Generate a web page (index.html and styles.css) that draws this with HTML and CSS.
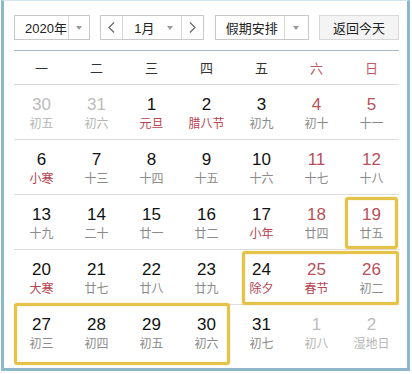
FILE: index.html
```html
<!DOCTYPE html>
<html lang="zh-CN">
<head>
<meta charset="utf-8">
<link rel="stylesheet" href="styles.css">
</head>
<body>
<div class="frame">
  <div class="toolbar">
    <div class="select year">
      <span class="sel-text">2020年</span>
      <span class="sel-arrow split"><i class="tri"></i></span>
    </div>
    <div class="select month">
      <span class="nav prev"><svg width="7" height="11" viewBox="0 0 7 11"><polyline points="6,0.5 1,5.5 6,10.5" fill="none" stroke="#666" stroke-width="1.2"/></svg></span>
      <span class="sel-text">1月</span>
      <span class="sel-arrow"><i class="tri"></i></span>
      <span class="nav next"><svg width="7" height="11" viewBox="0 0 7 11"><polyline points="1,0.5 6,5.5 1,10.5" fill="none" stroke="#666" stroke-width="1.2"/></svg></span>
    </div>
    <div class="select holiday">
      <span class="sel-text">假期安排</span>
      <span class="sel-arrow split"><i class="tri"></i></span>
    </div>
    <button class="today">返回今天</button>
  </div>

  <div class="weekdays">
    <span>一</span><span>二</span><span>三</span><span>四</span><span>五</span><span class="we">六</span><span class="we">日</span>
  </div>

  <div class="board">
    <div class="days">
      <div class="day out"><b class="num">30</b><span class="lunar">初五</span></div>
      <div class="day out"><b class="num">31</b><span class="lunar">初六</span></div>
      <div class="day"><b class="num">1</b><span class="lunar fest">元旦</span></div>
      <div class="day"><b class="num">2</b><span class="lunar fest">腊八节</span></div>
      <div class="day"><b class="num">3</b><span class="lunar">初九</span></div>
      <div class="day weekend"><b class="num">4</b><span class="lunar">初十</span></div>
      <div class="day weekend"><b class="num">5</b><span class="lunar">十一</span></div>

      <div class="day"><b class="num">6</b><span class="lunar fest">小寒</span></div>
      <div class="day"><b class="num">7</b><span class="lunar">十三</span></div>
      <div class="day"><b class="num">8</b><span class="lunar">十四</span></div>
      <div class="day"><b class="num">9</b><span class="lunar">十五</span></div>
      <div class="day"><b class="num">10</b><span class="lunar">十六</span></div>
      <div class="day weekend"><b class="num">11</b><span class="lunar">十七</span></div>
      <div class="day weekend"><b class="num">12</b><span class="lunar">十八</span></div>

      <div class="day"><b class="num">13</b><span class="lunar">十九</span></div>
      <div class="day"><b class="num">14</b><span class="lunar">二十</span></div>
      <div class="day"><b class="num">15</b><span class="lunar">廿一</span></div>
      <div class="day"><b class="num">16</b><span class="lunar">廿二</span></div>
      <div class="day"><b class="num">17</b><span class="lunar fest">小年</span></div>
      <div class="day weekend"><b class="num">18</b><span class="lunar">廿四</span></div>
      <div class="day weekend"><b class="num">19</b><span class="lunar">廿五</span></div>

      <div class="day"><b class="num">20</b><span class="lunar fest">大寒</span></div>
      <div class="day"><b class="num">21</b><span class="lunar">廿七</span></div>
      <div class="day"><b class="num">22</b><span class="lunar">廿八</span></div>
      <div class="day"><b class="num">23</b><span class="lunar">廿九</span></div>
      <div class="day"><b class="num">24</b><span class="lunar fest">除夕</span></div>
      <div class="day weekend"><b class="num">25</b><span class="lunar fest">春节</span></div>
      <div class="day weekend"><b class="num">26</b><span class="lunar">初二</span></div>

      <div class="day last"><b class="num">27</b><span class="lunar">初三</span></div>
      <div class="day last"><b class="num">28</b><span class="lunar">初四</span></div>
      <div class="day last"><b class="num">29</b><span class="lunar">初五</span></div>
      <div class="day last"><b class="num">30</b><span class="lunar">初六</span></div>
      <div class="day last"><b class="num">31</b><span class="lunar">初七</span></div>
      <div class="day last out"><b class="num">1</b><span class="lunar">初八</span></div>
      <div class="day last out"><b class="num">2</b><span class="lunar">湿地日</span></div>
    </div>
    <div class="marks">
      <span class="mark mark-19"></span>
      <span class="mark mark-24"></span>
      <span class="mark mark-27"></span>
    </div>
  </div>
</div>
</body>
</html>
```

FILE: styles.css
```css
* { box-sizing: border-box; }

html, body {
  margin: 0;
  padding: 0;
  background: #ffffff;
}

body {
  font-family: "Liberation Sans", "Noto Sans CJK SC", Arial, sans-serif;
  color: #1a1a1a;
}

.frame {
  width: 409px;
  height: 371px;
  margin: 0 2px 0 1px;
  border: 3px solid #8db8cc;
  border-top: 1px solid #d3e5ee;
  padding: 14px 8px 0 10px;
  background: #fff;
}

/* toolbar */
.toolbar {
  display: flex;
  justify-content: space-between;
  height: 25px;
  margin-bottom: 10px;
}

.select {
  display: flex;
  align-items: stretch;
  border: 1px solid #c9c9c9;
  background: #fff;
  font-size: 13px;
  color: #222;
}

.sel-text {
  display: flex;
  align-items: center;
  padding-left: 10px;
  flex: 1;
  font-family: "Liberation Sans", "Noto Sans CJK SC", sans-serif;
}

.sel-arrow {
  display: flex;
  align-items: center;
  justify-content: center;
}

.sel-arrow.split {
  border-left: 1px solid #d6d6d6;
}

.tri {
  display: block;
  width: 0;
  height: 0;
  border-left: 3.5px solid transparent;
  border-right: 3.5px solid transparent;
  border-top: 4px solid #9a9a9a;
}

.year { width: 76px; }
.year .sel-arrow { width: 21px; }

.month { width: 104px; }
.month .sel-text { padding-left: 11px; }
.month .sel-arrow { width: 22px; }

.nav {
  width: 22px;
  display: flex;
  align-items: center;
  justify-content: center;
}
.nav.prev { border-right: 1px solid #d6d6d6; }
.nav.next { border-left: 1px solid #d6d6d6; }

.holiday { width: 94px; }
.holiday .sel-arrow { width: 24px; }

.today {
  width: 80px;
  margin: 0;
  padding: 0;
  border: 1px solid #d8d8d8;
  background: #f4f4f4;
  font-family: "Noto Sans CJK SC", sans-serif;
  font-size: 13px;
  color: #222;
}

/* weekdays */
.weekdays {
  display: grid;
  grid-template-columns: repeat(7, 1fr);
  height: 35px;
  border-top: 1px solid #a9b8c4;
  border-bottom: 1px solid #d8d8d8;
  align-items: center;
  font-family: "Noto Sans CJK SC", sans-serif;
  font-size: 13px;
  color: #333;
}

.weekdays span {
  text-align: center;
}

.weekdays .we {
  color: #c05a64;
}

/* board */
.board {
  display: grid;
}

.days,
.marks {
  grid-area: 1 / 1;
  display: grid;
  grid-template-columns: repeat(7, 1fr);
  grid-template-rows: repeat(5, 55px);
}

.day {
  display: flex;
  flex-direction: column;
  align-items: center;
  padding-top: 10px;
  border-bottom: 1px solid #dcdcdc;
}

.day.last {
  border-bottom: none;
}

.num {
  font-weight: normal;
  font-size: 17px;
  line-height: 20px;
  color: #111;
}

.lunar {
  font-family: "Noto Sans CJK SC", sans-serif;
  font-size: 12px;
  line-height: 16px;
  color: #8a8a8a;
}

.lunar.fest {
  color: #b8424e;
}

.weekend .num {
  color: #b8505a;
}

.out .num {
  color: #bcbcbc;
}

.out .lunar {
  color: #b5b5b5;
}

.marks {
  pointer-events: none;
}

.mark {
  border: 3px solid #e5c24a;
  border-radius: 3px;
  box-shadow: 0 0 2px rgba(240, 215, 110, 0.7), inset 0 0 2px rgba(240, 215, 110, 0.6);
}

.mark-19 {
  grid-row: 3;
  grid-column: 7;
  margin: 2px 1px 1px 1px;
}

.mark-24 {
  grid-row: 4;
  grid-column: 5 / 8;
  margin: 1px 0 0 8px;
}

.mark-27 {
  grid-row: 5;
  grid-column: 1 / 5;
  margin: -2px 4px -5px 0;
}
```
